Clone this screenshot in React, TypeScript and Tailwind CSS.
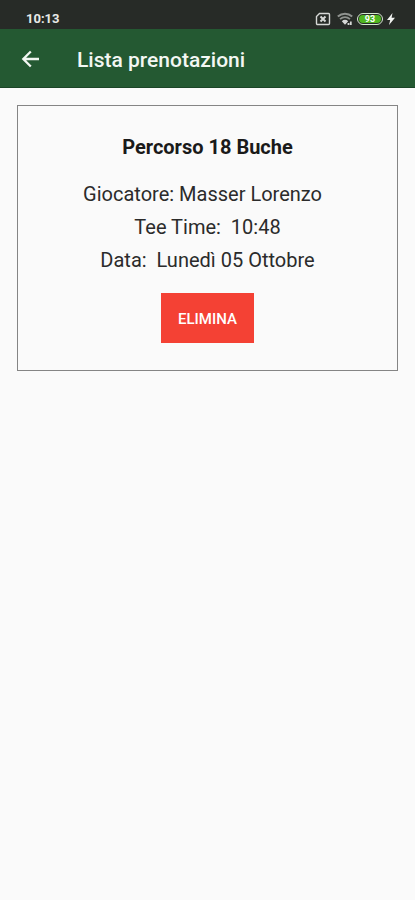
import { ReactNode } from "react";
import clsx from "clsx";

interface Booking {
  id: number;
  course: string;
  player: string;
  teeTime: string;
  date: string;
}

const bookings: Booking[] = [
  {
    id: 1,
    course: "Percorso 18 Buche",
    player: "Masser Lorenzo",
    teeTime: "10:48",
    date: "Lunedì 05 Ottobre",
  },
];

function NoSimIcon() {
  return (
    <svg viewBox="0 0 16 14" className="h-3.5 w-4" fill="none" stroke="#d6d8d6">
      <path d="M4.5 1.5h9a1 1 0 0 1 1 1v9a1 1 0 0 1-1 1h-11a1 1 0 0 1-1-1v-7z" strokeWidth="1.4" />
      <path d="M5.5 4.5l5 5M10.5 4.5l-5 5" strokeWidth="2" />
    </svg>
  );
}

function WifiIcon() {
  return (
    <svg viewBox="0 0 16 14" className="h-3.5 w-4" fill="none" stroke="#8f938f">
      <path d="M.8 4.5c4.2-3.7 10.2-3.7 14.4 0" strokeWidth="2" />
      <path d="M3 7.2c3-2.7 7-2.7 10 0" strokeWidth="1.8" />
      <path d="M4.8 9.2c1.9-1.9 4.500-1.900 6.400 0L8 12.800z" fill="#d6d8d6" stroke="none" />
      <path d="M11.5 11v2M13.8 9.500V13" stroke="#d6d8d6" strokeWidth="1.8" />
    </svg>
  );
}

function BoltIcon() {
  return (
    <svg viewBox="0 0 8 12" className="h-3 w-2" fill="#f1f3f1">
      <path d="M5.5 0L0 7h3.2L2 12l6-7.2H4.6z" />
    </svg>
  );
}

function BackIcon() {
  return (
    <svg viewBox="0 0 24 24" className="size-6" fill="none" stroke="#f3f7f3" strokeWidth="2.3">
      <path d="M21 12H5.5M12.8 4.5L5.300 12l7.500 7.500" />
    </svg>
  );
}

function StatusBar() {
  return (
    <div className="flex h-[29px] items-end justify-between bg-[#272b27] pr-5 pb-0.5 pl-[26px] text-[13px] leading-4 font-bold text-[#e8eae8]">
      <span>10:13</span>
      <div className="flex h-4 items-center">
        <NoSimIcon />
        <span className="ml-1.5 flex">
          <WifiIcon />
        </span>
        <span className="mx-1 flex h-3 w-[26px] rounded-full border border-[#d5e8cf] p-px">
          <span className="flex flex-1 items-center justify-center rounded-full bg-[#4fb51f] text-[9px] leading-none text-white">
            93
          </span>
        </span>
        <BoltIcon />
      </div>
    </div>
  );
}

function Line({ children, className }: { children: ReactNode; className?: string }) {
  return (
    <p className={clsx("text-xl leading-[33px] whitespace-pre text-[#2b2b2b]", className)}>
      {children}
    </p>
  );
}

function BookingCard({ booking }: { booking: Booking }) {
  return (
    <article className="flex flex-col items-center border border-[#858585] pt-[25px] pb-[27px]">
      <h2 className="mb-3.5 text-xl leading-[33px] font-bold text-[#1a1a1a]">
        {booking.course}
      </h2>
      <Line>{`Giocatore: ${booking.player}  `}</Line>
      <Line>{`Tee Time:  ${booking.teeTime}`}</Line>
      <Line>{`Data:  ${booking.date}`}</Line>
      <button
        type="button"
        className="mt-4 h-[50px] bg-[#f44134] px-[17px] pt-0.5 text-[15px] font-medium text-white uppercase"
      >
        Elimina
      </button>
    </article>
  );
}

export default function App() {
  return (
    <div className="min-h-screen bg-[#fafafa] font-[Roboto,sans-serif]">
      <StatusBar />
      <header className="flex h-[59px] items-center border-b border-[#1b4527] bg-[#245932] pl-[18px]">
        <button type="button" aria-label="Indietro" className="pt-0.5">
          <BackIcon />
        </button>
        <h1 className="ml-[35px] pt-1.5 text-[21px] font-medium text-[#f3f7f3]">
          Lista prenotazioni
        </h1>
      </header>
      <main className="flex flex-col gap-4 px-[17px] pt-[17px]">
        {bookings.map((booking) => (
          <BookingCard key={booking.id} booking={booking} />
        ))}
      </main>
    </div>
  );
}
